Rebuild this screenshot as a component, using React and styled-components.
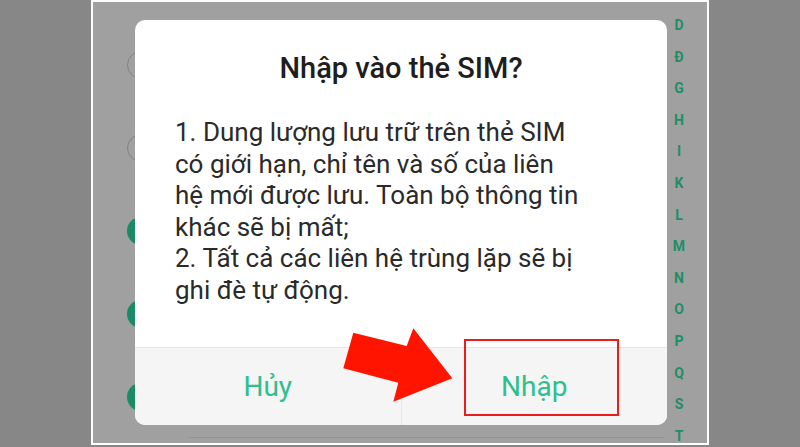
import React from "react";
import styled, { createGlobalStyle } from "styled-components";

const GlobalStyle = createGlobalStyle`
  html, body { margin: 0; padding: 0; }
  body {
    background: #878787;
    font-family: Roboto, "Noto Sans", "Liberation Sans", sans-serif;
  }
`;

const Page = styled.div`
  position: relative;
  width: 800px;
  height: 447px;
  display: flex;
  justify-content: center;
  background: #878787;
  overflow: hidden;
`;

const Frame = styled.div`
  position: relative;
  width: 618px;
  height: 445px;
  box-sizing: border-box;
  border: 2px solid #ffffff;
  background: #a0a0a0;
  display: flex;
`;

const ContactList = styled.div`
  flex: 1;
  display: flex;
  flex-direction: column;
  padding-top: 21.5px;
`;

const ContactRow = styled.div`
  height: 83px;
  flex: none;
  display: flex;
  align-items: stretch;
  padding-left: 34px;
  gap: 33px;
`;

const Avatar = styled.div`
  align-self: center;
  width: 28px;
  height: 28px;
  box-sizing: border-box;
  border-radius: 50%;
  flex: none;
  background: ${(p) => (p.$filled ? "#1b8a67" : "transparent")};
  border: ${(p) => (p.$filled ? "none" : "1.5px solid #828282")};
`;

const RowBody = styled.div`
  flex: 1;
  border-bottom: 1px solid #939393;
  margin-bottom: 1px;
`;

const IndexBar = styled.div`
  width: 30px;
  flex: none;
  margin-right: 13px;
  padding-top: 8px;
  display: flex;
  flex-direction: column;
  align-items: center;
`;

const IndexLetter = styled.div`
  height: 31.6px;
  line-height: 31.6px;
  font-size: 14px;
  font-weight: 700;
  color: #1f8d67;
  font-family: Roboto, "Liberation Sans", sans-serif;
`;

const Dialog = styled.div`
  position: absolute;
  left: 42px;
  top: 18px;
  width: 532px;
  height: 405px;
  background: #ffffff;
  border-radius: 10px;
  overflow: hidden;
  display: flex;
  flex-direction: column;
`;

const DialogContent = styled.div`
  flex: 1;
  padding: 32px 30px 0 40px;
`;

const Title = styled.div`
  text-align: center;
  margin-left: -10px;
  font-size: 29px;
  font-weight: 500;
  line-height: 32px;
  color: #1e1e1e;
`;

const Message = styled.div`
  margin-top: 33px;
  font-size: 26px;
  line-height: 31.6px;
  color: #2a2a2a;
  white-space: pre;
`;

const ButtonBar = styled.div`
  height: 77px;
  flex: none;
  display: flex;
  background: #f5f5f5;
  border-top: 1px solid #e6e6e6;
`;

const DialogButton = styled.div`
  flex: 1;
  display: flex;
  align-items: center;
  justify-content: center;
  font-size: 28px;
  color: #2ebf8d;
  border-left: ${(p) => (p.$divider ? "1px solid #e6e6e6" : "none")};
`;

const HighlightBox = styled.div`
  position: absolute;
  left: 464px;
  top: 339px;
  width: 155px;
  height: 77px;
  box-sizing: border-box;
  border: 2px solid #ec1c1c;
`;

const ArrowSvg = styled.svg`
  position: absolute;
  left: 340px;
  top: 325px;
`;

const letters = ["D", "Đ", "G", "H", "I", "K", "L", "M", "N", "O", "P", "Q", "S", "T"];
const avatars = [false, false, true, true, true];

const message = `1. Dung lượng lưu trữ trên thẻ SIM
có giới hạn, chỉ tên và số của liên
hệ mới được lưu. Toàn bộ thông tin
khác sẽ bị mất;
2. Tất cả các liên hệ trùng lặp sẽ bị
ghi đè tự động.`;

export default function App() {
  return (
    <>
      <GlobalStyle />
      <Page>
        <Frame>
          <ContactList>
            {avatars.map((filled, i) => (
              <ContactRow key={i}>
                <Avatar $filled={filled} />
                <RowBody />
              </ContactRow>
            ))}
          </ContactList>
          <IndexBar>
            {letters.map((l) => (
              <IndexLetter key={l}>{l}</IndexLetter>
            ))}
          </IndexBar>
          <Dialog>
            <DialogContent>
              <Title>Nhập vào thẻ SIM?</Title>
              <Message>{message}</Message>
            </DialogContent>
            <ButtonBar>
              <DialogButton>Hủy</DialogButton>
              <DialogButton $divider>Nhập</DialogButton>
            </ButtonBar>
          </Dialog>
        </Frame>
        <ArrowSvg width="116" height="80" viewBox="0 0 116 80">
          <polygon
            points="13.3,7.7 66.7,21 73.3,3.3 112.3,53.3 53.3,76.7 58.3,57.7 3.3,43.3"
            fill="#ff1400"
          />
        </ArrowSvg>
        <HighlightBox />
      </Page>
    </>
  );
}
